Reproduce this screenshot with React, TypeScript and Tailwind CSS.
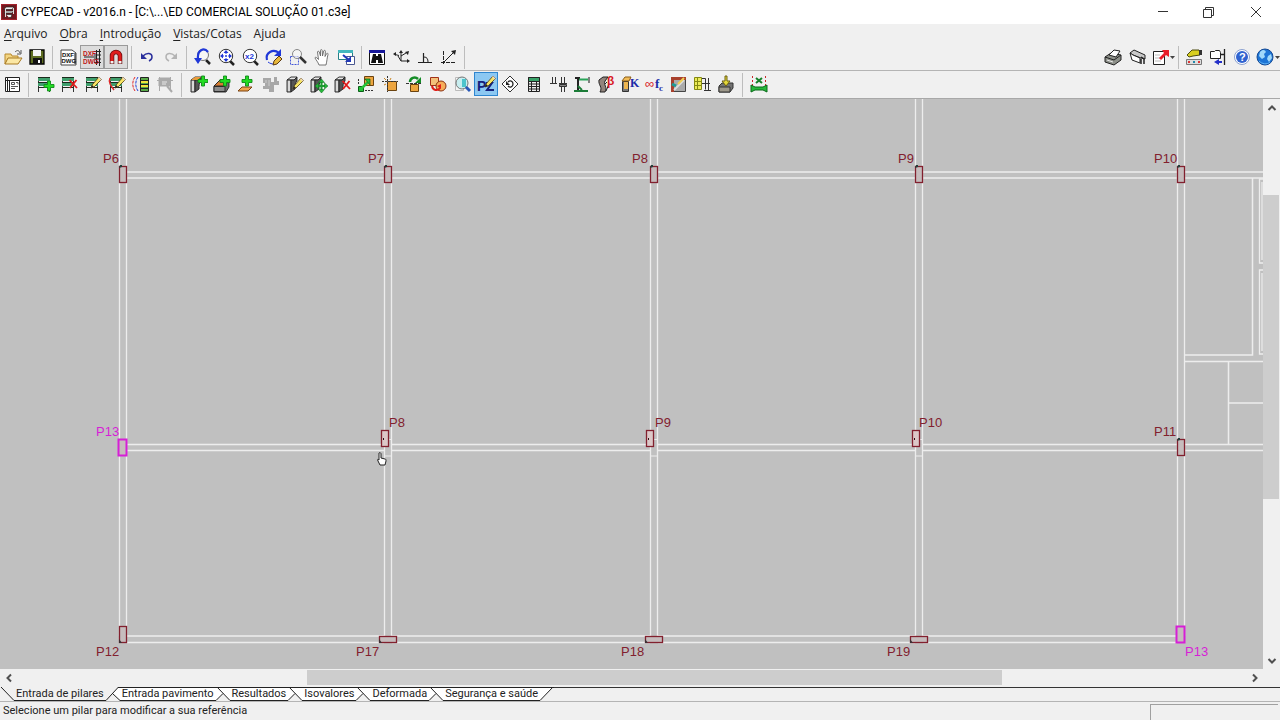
import React from "react";

type Kids = { children?: React.ReactNode };

/* ---------- shared pieces of the toolbar drawings (20 x 20 grid) ---------- */

const Plus = ({ x, y }: { x: number; y: number }) => (
  <path
    transform={`translate(${x} ${y})`}
    d="M-1.5-5h3v3.500h3.500v3h-3.500v3.500h-3v-3.500h-3.500v-3h3.500z"
    fill="#22dc22"
    stroke="#0f8a18"
    strokeWidth=".9"
  />
);

const Cross = ({ x, y }: { x: number; y: number }) => (
  <path transform={`translate(${x} ${y})`} d="M-3.500-4L4 4M3.500-4L-3 4" stroke="#e01818" strokeWidth="1.800" fill="none" />
);

const Pencil = ({ x, y }: { x: number; y: number }) => (
  <g transform={`translate(${x} ${y})`}>
    <path d="M4-5L6.500-2.500L-1 5L-4 6L-3 3z" fill="#f7e463" stroke="#4a3a14" strokeWidth=".8" />
    <path d="M-4 6L-3 3L-1 5z" fill="#222" />
    <path d="M4-5L6.500-2.500L5.500-1.500L3-4z" fill="#f0d8c0" />
  </g>
);

const Storeys = () => (
  <g>
    <path d="M3.500 3v15M14.500 3v15" stroke="#333" />
    <path d="M3 5.500h12M3 10.500h12" stroke="#3f9f6c" strokeWidth="3" />
    <path d="M3 3.500h12M3 8.500h12M3 13.500h12" stroke="#1c2a1c" strokeWidth="1.200" />
  </g>
);

const Pillar = () => (
  <g>
    <path d="M3 6l4-3h6l-3 3z" fill="#e8e8e8" stroke="#222" strokeWidth=".9" />
    <path d="M3 6h4v12H3z" fill="#b4b4b4" stroke="#222" strokeWidth=".9" />
    <path d="M7 6h3l3-3v4c-2 2-2 4-2 8l-4 3z" fill="#555" stroke="#222" strokeWidth=".9" />
    <path d="M5 7v10" stroke="#fff" />
  </g>
);

const Lens = ({ children }: Kids) => (
  <g>
    <path d="M14 14l4 4" stroke="#222" strokeWidth="2.500" />
    <circle cx="10" cy="9" r="6.700" fill="#fff" stroke="#333" />
    {children}
  </g>
);

/* ---------- toolbar drawings ---------- */

const icons = {
  open: (
    <g>
      <path d="M2 7h6l1 2h6v3H5l-3 5z" fill="#f3d582" stroke="#b8892c" />
      <path d="M5 11h14l-4 6H2z" fill="#fbe7a4" stroke="#a87a24" />
      <path d="M12 5c2-2 4-2 5 1M18 3v4h-4" fill="none" stroke="#555" />
    </g>
  ),
  save: (
    <g>
      <path d="M3 3h14v14H3z" fill="#5f6e22" stroke="#000" strokeWidth="1.300" />
      <path d="M6 3h8v6H6z" fill="#f4f4f4" />
      <path d="M6 11h9v6H6z" fill="#111" />
      <path d="M11 13h2v3h-2z" fill="#fff" />
    </g>
  ),
  dxf: (
    <g>
      <path d="M3 3h11l4 3v12H3z" fill="#fff" stroke="#444" />
      <text x="4" y="9.500" fontSize="6" fontWeight="700" fill="#111">DXF</text>
      <text x="3.500" y="16" fontSize="6" fontWeight="700" fill="#111">DWG</text>
      <path d="M17 6v11" stroke="#111" />
    </g>
  ),
  dxfLayers: (
    <g>
      <path d="M14.500 3v15M17.500 2v17M12 4.500h7M12 8h7M12 12h7M12 15.500h7" stroke="#222" />
      <text x="1" y="8.500" fontSize="6.500" fontWeight="700" fill="#c01818">DXF</text>
      <text x="1" y="17" fontSize="6.500" fontWeight="700" fill="#c01818">DWG</text>
      <path d="M2 10h13" stroke="#222" />
    </g>
  ),
  magnet: (
    <g fill="none">
      <path d="M6 17V9a4 4 0 0 1 8 0v8" stroke="#6b0d0d" strokeWidth="4.500" />
      <path d="M6 14V9a4 4 0 0 1 8 0v5" stroke="#e01c1c" strokeWidth="3" />
      <path d="M6 14v2.500M14 14v2.500" stroke="#f4f4f4" strokeWidth="3" />
    </g>
  ),
  undo: (
    <g fill="none" stroke="#2a2f9c" strokeWidth="1.500">
      <path d="M6 9c4-4 9-3 9 1c0 2-1 3-3 4" />
      <path d="M4 6v6h6z" fill="#2a2f9c" stroke="none" />
    </g>
  ),
  redo: (
    <g fill="none" stroke="#b4b4b4" strokeWidth="1.500">
      <path d="M14 9c-4-4-9-3-9 1c0 2 1 3 3 4" />
      <path d="M16 6v6h-6z" fill="#b4b4b4" stroke="none" />
    </g>
  ),
  zoomPrev: (
    <g>
      <path d="M14 13l4 4" stroke="#222" strokeWidth="2.500" />
      <circle cx="11" cy="8" r="5.500" fill="#f6f6f6" stroke="#777" />
      <path d="M16 5C12 0 5 3 6 12" stroke="#2038d8" strokeWidth="2.200" fill="none" />
      <path d="M2 11h8l-4 6z" fill="#2038d8" />
    </g>
  ),
  zoomAll: (
    <Lens>
      <path d="M10 3l2.500 3h-5zM10 15l2.500-3h-5zM4 9l3-2.500v5zM16 9l-3-2.500v5z" fill="#2038d8" />
      <path d="M10 5v8M6 9h8" stroke="#2038d8" strokeDasharray="2 1" />
    </Lens>
  ),
  zoom2: (
    <Lens>
      <text x="5" y="12" fontSize="8" fontWeight="700" fill="#2038d8">x2</text>
    </Lens>
  ),
  redraw: (
    <g>
      <path d="M3 13C1 6 9 1 15 6" stroke="#2038d8" strokeWidth="2.200" fill="none" />
      <path d="M17 2v7h-7z" fill="#2038d8" />
      <path d="M4 15c4 3 8 2 9 1" stroke="#2038d8" fill="none" />
      <path d="M15 9l3 3-5 5-4 1 1-4z" fill="#e8b83c" stroke="#5c3810" />
    </g>
  ),
  zoomWindow: (
    <g>
      <path d="M2.500 9.500h8v8h-8z" fill="none" stroke="#4356d8" strokeDasharray="2 1" />
      <circle cx="9" cy="7" r="4.500" fill="#f8f8f8" fillOpacity=".6" stroke="#888" />
      <path d="M12 10l6 6" stroke="#333" strokeWidth="2.500" />
    </g>
  ),
  pan: (
    <path
      d="M7 18c-1-3-3-5-4-7c0-1 1-1 2 0l1.500 1.500L5.500 5c0-1 1.500-1 1.800 0L8.500 9V3.500c0-1.200 1.600-1.200 1.700 0L10.500 9l1.200-5c.3-1 1.800-.8 1.700.3L13 9.500l1.500-2.800c.6-1 1.900-.3 1.500.8C15 11 15 14 14 18z"
      fill="#fff"
      stroke="#666"
      strokeWidth=".9"
    />
  ),
  newView: (
    <g>
      <path d="M2.500 3.500h14v9h-14z" fill="#fff" stroke="#257f86" />
      <path d="M2 3h15v3H2z" fill="#43b7bd" />
      <path d="M10.500 9.500h8v8h-8z" fill="#fff" stroke="#4a5890" />
      <path d="M7 8l6 5" stroke="#2038b8" strokeWidth="2" />
      <path d="M15 9v6H9z" fill="#2038b8" />
    </g>
  ),
  find: (
    <g>
      <path d="M2.500 3.500h15v14h-15z" fill="#fff" stroke="#111" />
      <path d="M2 3h16v3H2z" fill="#18189a" />
      <path d="M6 7h3v2h2V7h3l2 9h-5v-3H9v3H4z" fill="#111" />
    </g>
  ),
  axes: (
    <g stroke="#222" fill="none">
      <path d="M10 6v8h7M10 14L7 9M4 7.500l4 1M10 9l5-3" />
      <path d="M2 7l3-2v4zM10 3l2 3H8zM19 14l-3-2v4zM18 4l-1 4-3-3z" fill="#222" stroke="none" />
    </g>
  ),
  ortho: (
    <g stroke="#222" fill="none">
      <path d="M3 15.500h14M8.500 6v9" strokeWidth="1.200" />
      <path d="M9 10c3 0 4 2 4 5" />
    </g>
  ),
  track: (
    <g stroke="#222" fill="none">
      <path d="M4.500 4v13M2 15.500h15" strokeDasharray="4 1" />
      <path d="M5 15L15 5" />
      <path d="M17 3l-1 5-4-4z" fill="#222" stroke="none" />
    </g>
  ),
  print: (
    <g stroke="#222">
      <path d="M2 10l6-4 10 2v5l-7 5-9-3z" fill="#8d9089" />
      <path d="M2 10l9 3 7-5" fill="none" />
      <path d="M6 8l5-5 6 1-4 6z" fill="#fff" />
      <path d="M4 13l6 2" stroke="#e8e8e8" />
    </g>
  ),
  plotter: (
    <g stroke="#222">
      <path d="M3 6l4-3 11 5v4l-4-1-8-3z" fill="#c8c8c8" />
      <path d="M3 6l3 2 7 3v5l-8-3z" fill="#fff" />
      <path d="M14 10l3 2v5M14 12v5" fill="none" strokeWidth="1.500" />
    </g>
  ),
  exportDoc: (
    <g>
      <path d="M3.500 4.500h11v13h-11z" fill="#fff" stroke="#222" />
      <path d="M5 8h5M5 11h6M5 14h6" stroke="#bbb" />
      <path d="M9 11l5-5-2-3h7v7l-3-2-5 5z" fill="#e81c28" />
    </g>
  ),
  settings: (
    <g>
      <path d="M2.500 12.500h15v5h-15z" fill="#ddd" stroke="#777" />
      <path d="M4 14h2v2H4z" fill="#d33" />
      <path d="M9 14h2v2H9z" fill="#28a" />
      <path d="M14 14h2v2h-2z" fill="#d33" />
      <path d="M3 8l5-5h7l1 2v3l-7 1-4 1z" fill="#d8cf20" stroke="#4c4a10" />
      <path d="M15 3h3v5h-3z" fill="#333" />
    </g>
  ),
  folderOut: (
    <g>
      <path d="M2.500 4.500h4l1-1h4l1 2v6h-10z" fill="#fff" stroke="#222" />
      <path d="M16.500 2v16M12 7.500h4" stroke="#222" strokeWidth="1.300" />
      <path d="M14 15H9" stroke="#2430c8" strokeWidth="2" />
      <path d="M6 15l5-3v6z" fill="#2430c8" />
    </g>
  ),
  help: (
    <g>
      <circle cx="10" cy="10" r="7.500" fill="#fff" stroke="#8aa0d0" />
      <circle cx="10" cy="10" r="6" fill="#2f62d0" />
      <text x="7" y="14" fontSize="11" fontWeight="700" fill="#fff">?</text>
    </g>
  ),
  globe: (
    <g>
      <circle cx="10" cy="10" r="8" fill="#1c74d6" stroke="#154a94" />
      <path d="M5 5c3-3 5-2 6 0l-2 2 1 3-3 2-3-3zM13 9l3-2 1 4-3 4-2-3z" fill="#9fd8fa" />
      <path d="M4 14c3 3 8 4 11 1" stroke="#62b4f4" fill="none" />
    </g>
  ),
  plan: (
    <g>
      <path d="M3.500 3.500h14v14h-14z" fill="#fff" stroke="#222" />
      <path d="M5.500 4v13M7.500 6v11M3 6.500h14" stroke="#222" fill="none" />
      <path d="M9.500 8.500h3v2h-3zM14 8.500h2v2M9 12.500h7M9 14.500h4" stroke="#555" fill="none" />
    </g>
  ),
  floorAdd: <g><Storeys /><Plus x={14} y={12} /></g>,
  floorDelete: <g><Storeys /><Cross x={14} y={10} /></g>,
  floorEdit: <g><Storeys /><Pencil x={12} y={8} /></g>,
  floorGroupEdit: (
    <g>
      <Storeys />
      <path d="M3 4c-2 4 1 8 4 12" stroke="#e02828" strokeWidth="1.500" fill="none" />
      <Pencil x={12} y={8} />
    </g>
  ),
  floorGroups: (
    <g>
      <path d="M9.500 3.500h8v14h-8z" fill="#58a848" stroke="#222" />
      <path d="M10 7h7v2h-7zM10 11h7v2h-7z" fill="#f2e43c" />
      <path d="M9 6.500h9M9 10.500h9M9 14.500h9" stroke="#222" />
      <path d="M4 3c-3 4-3 10 0 14" stroke="#e02828" fill="none" strokeDasharray="3 1" />
      <path d="M7 3c-3 4-3 10 0 14" stroke="#2040d8" fill="none" strokeDasharray="3 1" />
    </g>
  ),
  floorMuted: (
    <g stroke="#aaa" fill="#aaa">
      <path d="M4 4h11v8H4z" />
      <path d="M4.500 3v14M15.500 3v12M2 6.500h16" fill="none" />
      <path d="M12 12l5 6" strokeWidth="2" />
      <path d="M7 8h5M7 10h4" stroke="#e8e8e8" />
    </g>
  ),
  pillarNew: <g><Pillar /><path d="M3 6l4-3h6l-3 3z" fill="#e89a3c" /><Plus x={15} y={7} /></g>,
  wallNew: (
    <g>
      <path d="M2 12l6-6h9v7l-3 5H2z" fill="#6d6d6d" stroke="#222" strokeWidth=".9" />
      <path d="M2 12l6-6h9l-4 6z" fill="#d87c34" stroke="#222" strokeWidth=".9" />
      <path d="M2 12.500h11v5H2z" fill="#8c8c8c" stroke="#222" strokeWidth=".9" />
      <Plus x={13} y={7} />
    </g>
  ),
  footingNew: (
    <g>
      <path d="M2 17l4-4h10l-4 4z" fill="#f0a44c" stroke="#7a4310" />
      <Plus x={11} y={7} />
    </g>
  ),
  mutedAdd: (
    <g fill="#a8a8a8">
      <path d="M3 4h8v4h3V3h3v4h2v4h-5v7H9v-3H3v-3h2V9H3z" />
      <path d="M6 6v3M9 6v6" stroke="#ccc" />
    </g>
  ),
  pillarEdit: <g><Pillar /><Pencil x={13} y={9} /></g>,
  pillarMove: (
    <g>
      <Pillar />
      <path d="M13.500 7v10M9 12h9" stroke="#1c9c30" strokeWidth="2" />
      <path d="M13.500 5l3 3.500h-6zM13.500 19l3-3.500h-6zM7 12l3.500-3v6zM20 12l-3.500-3v6z" fill="#27b83a" stroke="#0d6a20" strokeWidth=".5" />
    </g>
  ),
  pillarDelete: <g><Pillar /><Cross x={14} y={11} /></g>,
  adjust: (
    <g>
      <path d="M8.500 2.500h9v9h-9z" fill="#eda53f" stroke="#6a4310" />
      <path d="M9 16.500h9M2.500 5v6" stroke="#333" strokeDasharray="2 1" />
      <path d="M2.500 12.500h5v5h-5z" fill="#25c238" stroke="#0a5f18" />
      <path d="M6 14l6-6" stroke="#25c238" strokeWidth="2.500" />
      <path d="M14 5v6L9 5z" fill="#25c238" stroke="#0a5f18" strokeWidth=".7" />
    </g>
  ),
  snapBox: (
    <g>
      <path d="M7.500 7.500h9v9h-9z" fill="#eda53f" stroke="#6a4310" />
      <path d="M2 7.500h16M7.500 2v16" stroke="#333" strokeDasharray="2 1" fill="none" />
      <path d="M4 4l2 2M4 11l2-1M11 4l-1 2" stroke="#c88420" />
    </g>
  ),
  rotateBox: (
    <g>
      <path d="M6.500 10.500h8v7h-8z" fill="#eda53f" stroke="#6a4310" />
      <path d="M2 9.500h16" stroke="#333" strokeDasharray="3 1" />
      <path d="M6 8c0-4 5-6 8-3" stroke="#148c26" strokeWidth="2.500" fill="none" />
      <path d="M17 3v6h-6z" fill="#148c26" />
    </g>
  ),
  joinShapes: (
    <g>
      <path d="M2.500 3.500h8v8h-8z" fill="#f3c07a" stroke="#a13018" />
      <circle cx="13" cy="12" r="5" fill="#f6ac58" stroke="#8a3010" />
      <path d="M4 12c1 5 6 5 8 2" stroke="#e01c18" strokeWidth="2" fill="none" />
      <path d="M13 10v5l-4-3z" fill="#e01c18" />
    </g>
  ),
  inspect: (
    <g>
      <path d="M3.500 3.500h8v13h-8z" fill="#f4f4f4" stroke="#bbb" />
      <circle cx="10" cy="9" r="6" fill="#c8eef0" stroke="#777" />
      <path d="M10 5h4v8h-4z" fill="#4cc4cc" />
      <path d="M14 13l4 4" stroke="#2858b8" strokeWidth="3" />
    </g>
  ),
  reference: (
    <g>
      <text x="1" y="17" fontSize="14" fontWeight="700" fill="#14207c">P</text>
      <path d="M10 9h6l-5 7h7" stroke="#14207c" strokeWidth="2" fill="none" />
      <Pencil x={13} y={7} />
    </g>
  ),
  diamond: (
    <g>
      <path d="M10 2l8 8-8 8-8-8z" fill="#fff" stroke="#333" />
      <path d="M8 8c2-2 5-1 5 2s-3 4-5 2" stroke="#222" strokeWidth="1.300" fill="none" />
      <path d="M6 7v4h4z" fill="#222" />
    </g>
  ),
  tableGreen: (
    <g>
      <path d="M4.500 3.500h11v14h-11z" fill="#eee" stroke="#222" />
      <path d="M4.500 3.500h11v4h-11z" fill="#38a268" stroke="#222" />
      <path d="M4 10h12M4 12.500h12M4 15h12M7.500 8v10M12.500 8v10" stroke="#222" />
    </g>
  ),
  rebars: (
    <g stroke="#333" fill="none">
      <path d="M4.500 3v7M7.500 3v7M2 9.500h7M13.500 3v7M16.500 3v7M11 9.500h8M13.500 13v5M16.500 13v5" />
      <path d="M11.500 10.500h7v2h-7z" fill="#888" />
    </g>
  ),
  bracket: (
    <g>
      <path d="M6 4v12M3 4h5" stroke="#222" strokeWidth="2" />
      <path d="M7 5.500h9" stroke="#28a458" strokeWidth="2" />
      <path d="M17 3v6" stroke="#111" />
      <path d="M6 12l4 4M2 17h14" stroke="#1c7c38" strokeWidth="1.800" />
    </g>
  ),
  buckling: (
    <g>
      <path d="M3 6l4-3h5l-3 4c-2 4 3 6 0 11H4c3-5-2-7-1-12z" fill="#91847c" stroke="#222" />
      <path d="M9 10l2-2M10 17l3-7" stroke="#222" />
      <text x="11" y="11" fontSize="12" fontWeight="700" fill="#d81824">β</text>
    </g>
  ),
  stiffness: (
    <g>
      <path d="M2.500 7.500h6v10h-6z" fill="#777" stroke="#333" />
      <path d="M2 7l3-4h6l-2 4z" fill="#f2bc58" stroke="#8a5c14" />
      <path d="M4 8h4v7H4z" fill="#efb64f" />
      <text x="10" y="13" fontSize="12" fontWeight="700" fontFamily="Liberation Serif, serif" fill="#1c2ca8">K</text>
    </g>
  ),
  concrete: (
    <g>
      <text x="1" y="14" fontSize="13" fill="#d81824">∞</text>
      <text x="11" y="14" fontSize="13" fontWeight="700" fontFamily="Liberation Serif, serif" fill="#1c2ca8">f</text>
      <text x="15" y="17" fontSize="9" fontWeight="700" fontFamily="Liberation Serif, serif" fill="#1c2ca8">c</text>
    </g>
  ),
  fireCheck: (
    <g>
      <path d="M3.500 3.500h14v14h-14z" fill="#aaa" stroke="#444" />
      <path d="M3 3h15v3H6v12H3z" fill="#a8402c" />
      <path d="M6 16L16 6" stroke="#ddd" strokeWidth="2" />
      <path d="M4 10l4 2" stroke="#1d9c96" strokeWidth="3" />
      <path d="M10 10l6-6" stroke="#f0d050" strokeWidth="2" />
    </g>
  ),
  jointLoads: (
    <g>
      <path d="M2.500 3.500h7v12h-7zM2 7.500h7M2 11.500h7M5.500 3v12" fill="#ecec58" stroke="#868a12" />
      <path d="M10 4.500h3.500v11M16.500 4v13M10 9.500h8M12 16.500h7" stroke="#333" fill="none" />
    </g>
  ),
  baseLoad: (
    <g>
      <path d="M3 12l3-3h11v5l-3 4H3z" fill="#727272" stroke="#333" />
      <path d="M3 13h11v5H3z" fill="#9d988a" stroke="#333" />
      <path d="M9 2h2v5h3l-4 5-4-5h3z" fill="#e4d83a" stroke="#6c6010" />
    </g>
  ),
  dimension: (
    <g>
      <path d="M3.500 2v16M16.500 2v16" stroke="#c82828" strokeDasharray="2 2" />
      <path d="M2 11l4 2h8l4-2v7l-4-2H6l-4 2z" fill="#25b83a" stroke="#0a6a1a" />
      <path d="M7 4l6 5M13 4L7 9" stroke="#148028" strokeWidth="2" />
    </g>
  ),
};

type IconName = keyof typeof icons;

function Tool({ name, label, look = "plain", caret = false }: { name: IconName; label: string; look?: "plain" | "on" | "active"; caret?: boolean }) {
  const looks = {
    plain: "border-transparent",
    on: "border-[#9a9a9a] bg-[#dcdcdc]",
    active: "border-[#2f86d0] bg-[#8cc8f2]",
  };
  return (
    <button type="button" aria-label={label} title={label} className={`flex h-6 shrink-0 items-center justify-center border ${caret ? "w-[26px]" : "w-6"} ${looks[look]}`}>
      <svg viewBox="0 0 20 20" className="size-5 shrink-0" fontFamily="Liberation Sans, sans-serif" aria-hidden="true">
        {icons[name]}
      </svg>
      {caret && (
        <svg viewBox="0 0 5 3" className="h-[3px] w-[5px] shrink-0" aria-hidden="true">
          <path d="M0 0h5l-2.500 3z" fill="#444" />
        </svg>
      )}
    </button>
  );
}

const Divider = ({ wide = false }: { wide?: boolean }) => (
  <span className={`flex shrink-0 justify-center py-px ${wide ? "w-[9px]" : "w-[7px]"}`}>
    <span className="w-px bg-[#bdbdbd]" />
  </span>
);

/* ---------- plan drawing ---------- */

const axisX = [119, 384, 650, 915, 1177];

type Column = { x: number; y: number; w: number; h: number; label: string; lx: number; ly: number; kind?: "picked" | "inner" | "base" };

const columns: Column[] = [
  { x: 119, y: 67, w: 8, h: 17, label: "P6", lx: 103, ly: 64 },
  { x: 384, y: 67, w: 8, h: 17, label: "P7", lx: 368, ly: 64 },
  { x: 650, y: 67, w: 8, h: 17, label: "P8", lx: 632, ly: 64 },
  { x: 915, y: 67, w: 8, h: 17, label: "P9", lx: 898, ly: 64 },
  { x: 1177, y: 67, w: 8, h: 17, label: "P10", lx: 1154, ly: 64 },
  { x: 118, y: 340, w: 9, h: 17, label: "P13", lx: 96, ly: 337, kind: "picked" },
  { x: 381, y: 331, w: 8, h: 17, label: "P8", lx: 389, ly: 328, kind: "inner" },
  { x: 646, y: 331, w: 8, h: 17, label: "P9", lx: 655, ly: 328, kind: "inner" },
  { x: 912, y: 331, w: 8, h: 17, label: "P10", lx: 919, ly: 328, kind: "inner" },
  { x: 1177, y: 340, w: 8, h: 17, label: "P11", lx: 1154, ly: 337 },
  { x: 119, y: 527, w: 8, h: 17, label: "P12", lx: 96, ly: 557, kind: "base" },
  { x: 379, y: 537, w: 18, h: 7, label: "P17", lx: 356, ly: 557, kind: "base" },
  { x: 645, y: 537, w: 18, h: 7, label: "P18", lx: 621, ly: 557, kind: "base" },
  { x: 910, y: 537, w: 18, h: 7, label: "P19", lx: 887, ly: 557, kind: "base" },
  { x: 1176, y: 527, w: 9, h: 17, label: "P13", lx: 1185, ly: 557, kind: "picked" },
];

function ColumnMark({ x, y, w, h, label, lx, ly, kind }: Column) {
  const picked = kind === "picked";
  const ink = picked ? "#d61fd6" : "#82202e";
  return (
    <g>
      <rect x={x + 0.5} y={y + 0.5} width={w - 1} height={h - 1} fill={kind === "inner" ? "#dcc8c8" : "#c6bcbd"} stroke={ink} strokeWidth={picked ? 2 : 1.3} />
      {kind === undefined && <path d={`M${x} ${y + 2}l1-3h2v2z`} fill="#24403c" />}
      {kind === "base" && <path d={`M${x} ${y + h - 4}v4h3z`} fill="#3c3034" />}
      {kind === "inner" && <path d={`M${x + 2} ${y + 8}h1v2h-1z`} fill="#301014" />}
      <text x={lx} y={ly} fill={ink} fontSize="13">{label}</text>
    </g>
  );
}

function Plan() {
  const spans = axisX.slice(0, -1).map((x, i) => [x + 8, axisX[i + 1]]);
  return (
    <svg className="block size-full" fontFamily="Liberation Sans, Arial, sans-serif" role="img" aria-label="Planta de pilares">
      <g fill="none" stroke="#ededed">
        {axisX.map((x) => (
          <path key={x} d={`M${x + 0.5} 0V537M${x + 7.5} 0V537`} strokeWidth="1.3" />
        ))}
        {spans.map(([a, b]) => (
          <path key={a} d={`M${a} 73H${b}M${a} 79H${b}M${a} 345.500H${b}M${a} 351.500H${b}M${a} 537H${b}M${a} 543.500H${b}`} strokeWidth="1.500" />
        ))}
        {axisX.slice(1, 4).map((x) => (
          <path key={x} d={`M${x} 340.500h8M${x} 357h8`} />
        ))}
        <path d="M1184 73H1263M1184 79H1263M1184 345.500H1263M1184 351.500H1263" strokeWidth="1.500" />
        <path d="M1252.500 79V256H1185M1184 262.500H1263M1228.500 263V345M1229 304H1263" strokeWidth="1.500" />
        <path d="M1263 80H1259.500V164H1263M1262 83V161M1263 171H1259.500V255H1263M1262 174V252" strokeWidth="1.300" />
      </g>
      {columns.map((c) => (
        <ColumnMark key={`${c.label}-${c.x}`} {...c} />
      ))}
      <path d="M379 354c1-1 2 0 2 1v4l4 1c1 0 1 1 1 2l-1 4h-5l-2-4c-1-2 0-2 1-1z" fill="#fff" stroke="#222" />
    </svg>
  );
}

/* ---------- scroll bars ---------- */

function ScrollArrow({ label, d }: { label: string; d: string }) {
  return (
    <button type="button" aria-label={label} className="flex size-[17px] shrink-0 items-center justify-center">
      <svg viewBox="0 0 10 10" className="size-[10px]" aria-hidden="true">
        <path d={d} fill="none" stroke="#505050" strokeWidth="2" />
      </svg>
    </button>
  );
}

/* ---------- sheet tabs ---------- */

const tabs = ["Entrada de pilares", "Entrada pavimento", "Resultados", "Isovalores", "Deformada", "Segurança e saúde"];

function TabEdge({ kind }: { kind: "start" | "afterActive" | "between" | "end" }) {
  return (
    <svg viewBox="0 0 14 14" className="h-[14px] w-[14px] shrink-0" aria-hidden="true">
      {kind === "start" && <path d="M1 0L14 13.500" stroke="#222" fill="none" />}
      {kind === "afterActive" && (
        <>
          <path d="M12.500 0H14V13.500L6.500 6.500z" fill="#fff" />
          <path d="M0 13.500L12.500 0M6.500 6.500L14 13.500" stroke="#222" fill="none" />
          <path d="M12 .5h2" stroke="#222" />
        </>
      )}
      {kind === "between" && (
        <>
          <path d="M0 0H14V13.500L7 6.500L0 13.500z" fill="#fff" />
          <path d="M1 0L14 13.500M0 13.500L7 6.500" stroke="#222" fill="none" />
          <path d="M0 .5h14" stroke="#222" />
        </>
      )}
      {kind === "end" && (
        <>
          <path d="M0 0H13L0 13.500z" fill="#fff" />
          <path d="M0 13.500L13 0M0 .5h14" stroke="#222" fill="none" />
        </>
      )}
    </svg>
  );
}

const menus: [string, string][] = [["A", "rquivo"], ["O", "bra"], ["I", "ntrodução"], ["V", "istas/Cotas"]];

export default function App() {
  return (
    <div className="flex h-screen flex-col overflow-hidden bg-[#f0f0f0] font-['Open_Sans','Noto_Sans',sans-serif] text-xs text-[#222]">
      <header className="flex h-6 shrink-0 items-center bg-white">
        <svg viewBox="0 0 16 16" className="ml-px mr-1 size-4 shrink-0" aria-hidden="true">
          <path d="M0 0h16v16H0z" fill="#a3222c" />
          <path d="M1 1h14v14H1z" fill="#6f1a20" />
          <path d="M5 3h8l-2 2.500H3zM5 7h8l-2 2H3zM5 10.500h6l-1 3H8" fill="#f0f0f0" stroke="#222" strokeWidth=".7" />
          <path d="M4.500 5v8M12.500 4v6" stroke="#ddd" />
        </svg>
        <h1 className="min-w-0 flex-1 truncate font-['Roboto','Open_Sans',sans-serif] text-black">CYPECAD - v2016.n - [C:\...\ED COMERCIAL SOLUÇÃO 01.c3e]</h1>
        <div className="flex">
          <button type="button" aria-label="Minimizar" className="flex h-6 w-[46px] items-center justify-center">
            <svg viewBox="0 0 12 12" className="size-3"><path d="M1 5.500h10" stroke="#333" /></svg>
          </button>
          <button type="button" aria-label="Restaurar" className="flex h-6 w-[46px] items-center justify-center">
            <svg viewBox="0 0 12 12" className="size-3"><path d="M.5 3.500h8v8h-8zM2.500 3.500v-2h8v8h-2" fill="none" stroke="#333" /></svg>
          </button>
          <button type="button" aria-label="Fechar" className="flex h-6 w-12 items-center justify-center">
            <svg viewBox="0 0 12 12" className="size-3"><path d="M1 1l10 10M11 1L1 11" stroke="#333" /></svg>
          </button>
        </div>
      </header>

      <nav className="flex h-5 shrink-0 items-center gap-3 px-1">
        {menus.map(([key, rest]) => (
          <button key={rest} type="button"><span className="underline underline-offset-2">{key}</span>{rest}</button>
        ))}
        <button type="button">Ajuda</button>
      </nav>

      <div className="flex h-[27px] shrink-0 justify-between border-b border-[#b4b4b4]">
        <div className="flex pl-px pt-px">
          <Tool name="open" label="Abrir" />
          <Tool name="save" label="Guardar" />
          <Divider />
          <Tool name="dxf" label="Editar máscaras" />
          <Tool name="dxfLayers" label="Máscaras DXF-DWG" look="on" />
          <Tool name="magnet" label="Capturas" look="on" />
          <Divider />
          <Tool name="undo" label="Desfazer" />
          <Tool name="redo" label="Refazer" />
          <Divider />
          <Tool name="zoomPrev" label="Vista anterior" />
          <Tool name="zoomAll" label="Janela completa" />
          <Tool name="zoom2" label="Ampliar x2" />
          <Tool name="redraw" label="Redesenhar" />
          <Tool name="zoomWindow" label="Marcar zoom" />
          <Tool name="pan" label="Deslocar imagem" />
          <Tool name="newView" label="Nova janela" />
          <Divider />
          <Tool name="find" label="Procurar" />
          <Tool name="axes" label="Coordenadas" />
          <Tool name="ortho" label="Ortogonal" />
          <Tool name="track" label="Referências" />
          <Divider />
        </div>
        <div className="flex pt-px">
          <Tool name="print" label="Listagens" />
          <Tool name="plotter" label="Desenhos" />
          <Tool name="exportDoc" label="Exportar" caret />
          <Divider />
          <Tool name="settings" label="Configuração" />
          <Tool name="folderOut" label="Pastas" />
          <Tool name="help" label="Ajuda em linha" />
          <Tool name="globe" label="Internet" caret />
        </div>
      </div>

      <div className="flex h-7 shrink-0 border-b border-[#a8a8a8] pt-px">
        <Tool name="plan" label="Dados gerais" />
        <Divider wide />
        <Tool name="floorAdd" label="Novos pisos" />
        <Tool name="floorDelete" label="Eliminar pisos" />
        <Tool name="floorEdit" label="Editar pisos" />
        <Tool name="floorGroupEdit" label="Editar grupos" />
        <Tool name="floorGroups" label="Unir grupos" />
        <Tool name="floorMuted" label="Dividir grupos" />
        <Divider wide />
        <Tool name="pillarNew" label="Novo pilar" />
        <Tool name="wallNew" label="Nova parede" />
        <Tool name="footingNew" label="Novo arranque" />
        <Tool name="mutedAdd" label="Nova cofragem" />
        <Tool name="pillarEdit" label="Editar pilar" />
        <Tool name="pillarMove" label="Mover pilar" />
        <Tool name="pillarDelete" label="Eliminar pilar" />
        <Tool name="adjust" label="Ajustar" />
        <Tool name="snapBox" label="Ponto fixo" />
        <Tool name="rotateBox" label="Ângulo" />
        <Tool name="joinShapes" label="Copiar" />
        <Tool name="inspect" label="Procurar pilar" />
        <Tool name="reference" label="Modificar referência" look="active" />
        <Tool name="diamond" label="Renumerar" />
        <Tool name="tableGreen" label="Modificar início e fim" />
        <Tool name="rebars" label="Desnível de apoio" />
        <Tool name="bracket" label="Vinculação exterior" />
        <Tool name="buckling" label="Coeficiente de encurvadura" />
        <Tool name="stiffness" label="Rigidez axial" />
        <Tool name="concrete" label="Betão" />
        <Tool name="fireCheck" label="Revestimento" />
        <Tool name="jointLoads" label="Cargas horizontais" />
        <Tool name="baseLoad" label="Cargas em cabeça" />
        <Divider wide />
        <Tool name="dimension" label="Cotas" />
      </div>

      <div className="flex min-h-0 flex-1">
        <main className="min-w-0 flex-1 overflow-hidden bg-[#c0c0c0]"><Plan /></main>
        <div className="flex w-[17px] shrink-0 flex-col">
          <ScrollArrow label="Subir" d="M1.500 7L5 3.500L8.500 7" />
          <div className="flex flex-1 flex-col pr-px">
            <div className="flex-[79]" />
            <div className="flex-[304] bg-[#cdcdcd]" />
            <div className="flex-[153]" />
          </div>
          <ScrollArrow label="Descer" d="M1.500 3L5 6.500L8.500 3" />
        </div>
      </div>

      <div className="flex h-[17px] shrink-0 pr-[17px]">
        <ScrollArrow label="Esquerda" d="M7 1.500L3.500 5L7 8.500" />
        <div className="flex flex-1 py-px">
          <div className="flex-[290]" />
          <div className="flex-[695] bg-[#cdcdcd]" />
          <div className="flex-[244]" />
        </div>
        <ScrollArrow label="Direita" d="M3 1.500L6.500 5L3 8.500" />
      </div>

      <div className="flex h-4 shrink-0 border-b border-[#b4b4b4] pt-px font-['Roboto','Liberation_Sans',sans-serif] text-[11px] leading-3" role="tablist">
        {tabs.map((tab, i) => (
          <React.Fragment key={tab}>
            <TabEdge kind={i === 0 ? "start" : i === 1 ? "afterActive" : "between"} />
            <button
              type="button"
              role="tab"
              aria-selected={i === 0}
              className={`h-[14px] shrink-0 whitespace-nowrap border-b border-[#222] px-0.5 ${i === 0 ? "" : "border-t bg-white"}`}
            >
              {tab}
            </button>
          </React.Fragment>
        ))}
        <TabEdge kind="end" />
        <div className="h-px flex-1 bg-[#333]" />
      </div>

      <footer className="flex h-[18px] shrink-0 justify-between pl-[3px] font-['Roboto','Liberation_Sans',sans-serif] text-[11px] leading-[18px]">
        <p>Selecione um pilar para modificar a sua referência</p>
        <div className="mr-0.5 mt-0.5 w-32 border-l border-t border-[#a0a0a0]" />
      </footer>
    </div>
  );
}
